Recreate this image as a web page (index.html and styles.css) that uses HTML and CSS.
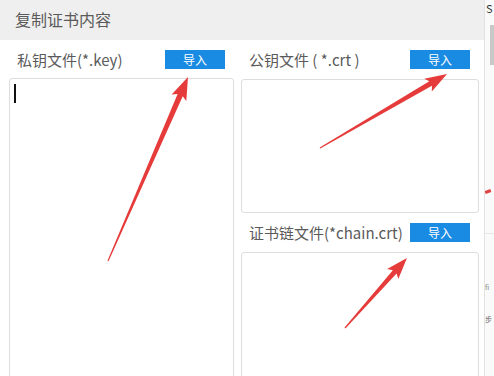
FILE: index.html
```html
<!DOCTYPE html>
<html lang="zh">
<head>
<meta charset="utf-8">
<title>复制证书内容</title>
<link rel="stylesheet" href="styles.css">
</head>
<body>
<div class="screen">
  <div class="dialog">
    <div class="header">复制证书内容</div>
    <div class="content">
      <div class="col col-left">
        <div class="label-row">
          <span class="label">私钥文件(*.key)</span>
          <button class="btn">导入</button>
        </div>
        <div class="box box-key"><span class="caret"></span></div>
      </div>
      <div class="col col-right">
        <div class="label-row row-crt">
          <span class="label">公钥文件 ( *.crt )</span>
          <button class="btn">导入</button>
        </div>
        <div class="box box-crt"></div>
        <div class="label-row row-chain">
          <span class="label">证书链文件(*chain.crt)</span>
          <button class="btn">导入</button>
        </div>
        <div class="box box-chain"></div>
      </div>
    </div>
  </div>
  <div class="edge">
    <span class="edge-s">S</span>
    <span class="edge-scroll"></span>
    <span class="edge-red"></span>
    <span class="edge-line"></span>
    <span class="edge-text">fi</span>
    <span class="edge-text edge-text2">步</span>
  </div>
  <svg class="arrows" width="494" height="376" viewBox="0 0 494 376">
    <g transform="translate(108 261) rotate(-66.5)">
      <polygon points="0,-0.6 181,-2.8 178,-8 200.6,0 178,8 181,2.8 0,0.6"/>
    </g>
    <g transform="translate(320 148) rotate(-30.2)">
      <polygon points="0,-0.6 128,-2.6 125,-7.5 147,0 125,7.5 128,2.6 0,0.6"/>
    </g>
    <g transform="translate(345 328) rotate(-48.5)">
      <polygon points="0,-0.6 75,-2.5 72,-7.5 93.5,0 72,7.5 75,2.5 0,0.6"/>
    </g>
  </svg>
</div>
</body>
</html>
```
FILE: styles.css
```css
html, body {
  margin: 0;
  padding: 0;
  background: #ffffff;
  overflow: hidden;
}
body {
  font-family: "Noto Sans CJK SC", "Noto Sans", sans-serif;
  color: #555555;
}
.screen {
  position: relative;
  width: 494px;
  height: 376px;
  display: flex;
  overflow: hidden;
}
.dialog {
  width: 484px;
  height: 376px;
  border-right: 1px solid #e2e2e2;
  background: #ffffff;
  overflow: hidden;
  flex: none;
}
.header {
  height: 40px;
  background: #efefef;
  padding-left: 15px;
  font-size: 16px;
  line-height: 38px;
  color: #5a5a5a;
}
.content {
  display: flex;
  gap: 7px;
  padding-left: 9px;
}
.col {
  display: flex;
  flex-direction: column;
}
.col-left { width: 225px; }
.col-right { width: 238px; }
.label-row {
  height: 38px;
  display: flex;
  align-items: center;
  justify-content: space-between;
  padding: 0 9px 0 8px;
}
.row-crt { height: 39px; }
.row-chain { height: 39px; }
.label {
  font-size: 15px;
  color: #5a5a5a;
  white-space: nowrap;
}
.btn {
  width: 60px;
  height: 19px;
  border: none;
  padding: 0;
  background: #1a8be2;
  color: #ffffff;
  font-family: "Noto Sans CJK SC", sans-serif;
  font-size: 12px;
  line-height: 19px;
}
.box {
  border: 1px solid #dddddd;
  border-radius: 3px;
  background: #ffffff;
  box-sizing: border-box;
}
.box-key {
  height: 320px;
  padding: 5px 0 0 4px;
}
.box-crt { height: 134px; }
.box-chain { height: 140px; }
.caret {
  display: block;
  width: 2px;
  height: 19px;
  background: #111111;
}
.edge {
  position: relative;
  flex: 1;
  display: flex;
  flex-direction: column;
  align-items: flex-start;
  overflow: hidden;
  background: #fafafa;
}
.edge-s {
  font-size: 11px;
  line-height: 16px;
  color: #333333;
  margin-left: 1px;
}
.edge-scroll {
  display: block;
  width: 4px;
  height: 40px;
  margin: 9px 0 0 5px;
  background: #c8c8c8;
}
.edge-red {
  display: block;
  width: 6px;
  height: 3px;
  margin-top: 125px;
  background: #e04040;
  transform: rotate(-20deg);
}
.edge-line {
  display: block;
  width: 9px;
  height: 1px;
  margin-top: 40px;
  background: #e6e6e6;
}
.edge-text {
  font-size: 7px;
  line-height: 10px;
  color: #888888;
  margin-top: 48px;
}
.edge-text2 {
  margin-top: 22px;
  color: #666666;
}
.arrows {
  position: absolute;
  left: 0;
  top: 0;
  pointer-events: none;
}
.arrows polygon {
  fill: #e63b3b;
}
```
